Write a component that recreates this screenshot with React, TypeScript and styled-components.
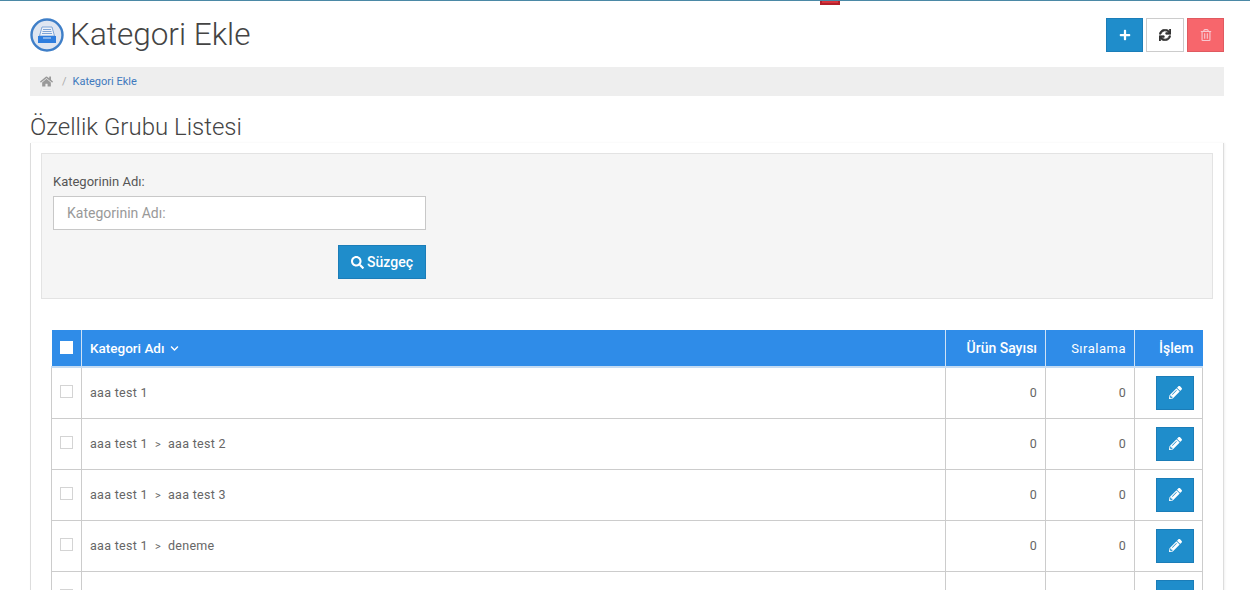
import { FunctionComponent, ReactNode } from "react";
import styled, { createGlobalStyle } from "styled-components";
import { FaHome, FaPlus, FaSync, FaRegTrashAlt, FaSearch, FaPencilAlt, FaChevronDown } from "react-icons/fa";

const GlobalStyle = createGlobalStyle`
    html, body {
        margin: 0;
        padding: 0;
        height: 590px;
        overflow: hidden;
        background: #fff;
        font-family: Roboto, "Liberation Sans", sans-serif;
        color: #555;
    }
`;

const Page = styled.div`
    position: relative;
    height: 590px;
    overflow: hidden;
    border-top: 1px solid #4b89a6;
    box-sizing: border-box;
    padding: 0 26px 0 30px;
`;

const RedTab = styled.div`
    position: absolute;
    top: -1px;
    left: 820px;
    width: 20px;
    height: 5px;
    box-sizing: border-box;
    background: #d8343d;
    border: 2px solid #b3202a;
    border-top: none;
`;

const Header = styled.div`
    display: flex;
    align-items: flex-start;
    justify-content: space-between;
    height: 66px;
`;

const TitleGroup = styled.div`
    display: flex;
    align-items: center;
    gap: 6px;
    padding-top: 15px;
`;

const Title = styled.h1`
    margin: 0;
    font-size: 31.5px;
    line-height: 38px;
    font-weight: 300;
    color: #444;
`;

const Actions = styled.div`
    display: flex;
    gap: 3px;
    padding-top: 17px;
`;

const ActionButton = styled.button<{ $tone: "blue" | "white" | "red" }>`
    width: ${(p) => (p.$tone === "white" ? "38px" : "37px")};
    height: 34px;
    padding: 0;
    display: flex;
    align-items: center;
    justify-content: center;
    font-size: 12px;
    border: 1px solid ${(p) => (p.$tone === "white" ? "#ccc" : p.$tone === "red" ? "#e05a60" : "#1b7db8")};
    background: ${(p) => (p.$tone === "white" ? "#fff" : p.$tone === "red" ? "#f7666c" : "#1f8dcb")};
    color: ${(p) => (p.$tone === "white" ? "#333" : p.$tone === "red" ? "#f8c8d0" : "#fff")};
`;

const RefreshIcon = styled(FaSync)`
    stroke: currentColor;
    stroke-width: 28px;
`;

const Breadcrumb = styled.div`
    height: 29px;
    display: flex;
    align-items: center;
    padding-left: 10px;
    background: #eee;
    font-size: 11px;
    color: #999;
`;

const Separator = styled.span`
    margin: 0 6px 0 9px;
    color: #aaa;
`;

const CrumbLink = styled.span`
    color: #3e79bd;
`;

const SectionTitle = styled.h2`
    margin: 16px 0 0;
    font-size: 24px;
    line-height: 30px;
    font-weight: 300;
    color: #444;
`;

const Portlet = styled.div`
    margin-top: 1px;
    padding: 10px 10px 0;
    height: 460px;
    border-left: 1px solid #ddd;
    border-right: 1px solid #ddd;
    box-shadow: 1px 0 2px rgba(0, 0, 0, 0.06);
`;

const FilterBox = styled.div`
    height: 146px;
    box-sizing: border-box;
    padding: 19px 11px 0;
    background: #f5f5f5;
    border: 1px solid #e3e3e3;
`;

const FilterForm = styled.div`
    width: 373px;
    display: flex;
    flex-direction: column;
`;

const FieldLabel = styled.label`
    font-size: 13px;
    line-height: 18px;
    color: #555;
    margin-bottom: 5px;
`;

const TextInput = styled.input`
    height: 34px;
    box-sizing: border-box;
    padding: 0 13px;
    border: 1px solid #c8c8c8;
    background: #fff;
    font-family: inherit;
    font-size: 14px;
    &::placeholder {
        color: #999;
        opacity: 1;
    }
`;

const FilterButton = styled.button`
    align-self: flex-end;
    margin-top: 15px;
    width: 88px;
    height: 34px;
    display: flex;
    align-items: center;
    justify-content: center;
    gap: 3px;
    padding: 0;
    background: #1f8dcb;
    border: 1px solid #1b7db8;
    color: #fff;
    font-family: inherit;
    font-size: 14px;
    font-weight: 500;
`;

const TableWrap = styled.div`
    margin: 31px 10px 0;
`;

const Table = styled.table`
    width: 1151px;
    table-layout: fixed;
    border-collapse: collapse;
`;

const HeadCell = styled.th<{ $right?: boolean; $plain?: boolean; $tight?: boolean }>`
    height: 37px;
    box-sizing: border-box;
    padding: ${(p) => (p.$tight ? "0 9px 0 0" : "0 8px")};
    background: #2f8ce8;
    border-left: 1px solid #cfe2f5;
    border-bottom: 2px solid #c5dcf3;
    color: #fff;
    font-size: ${(p) => (p.$plain ? "13px" : "14px")};
    font-weight: ${(p) => (p.$plain ? 400 : 500)};
    letter-spacing: ${(p) => (p.$plain ? "0.5px" : "0")};
    text-align: ${(p) => (p.$right ? "right" : "left")};
    &:first-child {
        border-left: none;
    }
`;

const NameHeading = styled.span`
    font-size: 13.5px;
`;

const Cell = styled.td<{ $right?: boolean }>`
    height: 51px;
    box-sizing: border-box;
    padding: 0 8px;
    border: 1px solid #ccc;
    border-top: none;
    font-size: 12.5px;
    letter-spacing: 0.3px;
    color: #666;
    text-align: ${(p) => (p.$right ? "right" : "left")};
`;

const ChevronIcon = styled(FaChevronDown)`
    font-size: 9px;
    margin-left: 5px;
`;

const CheckBox = styled.span<{ $head?: boolean }>`
    display: block;
    width: 13px;
    height: 13px;
    box-sizing: border-box;
    margin-bottom: 2px;
    background: #fff;
    border: 1px solid ${(p) => (p.$head ? "#fff" : "#d4d4d4")};
`;

const Arrow = styled.span`
    margin: 0 7px;
    font-size: 11px;
`;

const EditButton = styled.button`
    display: flex;
    align-items: center;
    justify-content: center;
    width: 38px;
    height: 34px;
    margin-left: 13px;
    padding: 0;
    background: #1f8dcb;
    border: 1px solid #1b7db8;
    color: #fff;
    font-size: 13px;
`;

const LogoIcon: FunctionComponent = () => (
    <svg width="34" height="34" viewBox="0 0 34 34">
        <circle cx="17" cy="17" r="15.5" fill="#dfe6f1" stroke="#3f7fc8" strokeWidth="2.4" />
        <path d="M12 9h10l2.5 9h-15z" fill="#eef2f8" stroke="#7fa6d8" strokeWidth="1" />
        <path d="M13 11.5h8M12.5 13.5h9M12 15.5h10" stroke="#6f9bd3" strokeWidth="0.9" />
        <path d="M8 18h18v7H8z" fill="#2f7ede" />
        <path d="M13 20h8" stroke="#bcd6f3" strokeWidth="1.2" />
    </svg>
);

const rows: ReactNode[] = [
    "aaa test 1",
    <>aaa test 1<Arrow>&gt;</Arrow>aaa test 2</>,
    <>aaa test 1<Arrow>&gt;</Arrow>aaa test 3</>,
    <>aaa test 1<Arrow>&gt;</Arrow>deneme</>,
    "",
];

export default function App() {
    return (
        <Page>
            <GlobalStyle />
            <RedTab />
            <Header>
                <TitleGroup>
                    <LogoIcon />
                    <Title>Kategori Ekle</Title>
                </TitleGroup>
                <Actions>
                    <ActionButton $tone="blue"><FaPlus /></ActionButton>
                    <ActionButton $tone="white"><RefreshIcon /></ActionButton>
                    <ActionButton $tone="red"><FaRegTrashAlt /></ActionButton>
                </Actions>
            </Header>
            <Breadcrumb>
                <FaHome size={13} />
                <Separator>/</Separator>
                <CrumbLink>Kategori Ekle</CrumbLink>
            </Breadcrumb>
            <SectionTitle>Özellik Grubu Listesi</SectionTitle>
            <Portlet>
                <FilterBox>
                    <FilterForm>
                        <FieldLabel>Kategorinin Adı:</FieldLabel>
                        <TextInput placeholder="Kategorinin Adı:" />
                        <FilterButton><FaSearch size={13} />Süzgeç</FilterButton>
                    </FilterForm>
                </FilterBox>
                <TableWrap>
                    <Table>
                        <colgroup>
                            <col width="30" />
                            <col width="864" />
                            <col width="100" />
                            <col width="89" />
                            <col width="68" />
                        </colgroup>
                        <thead>
                            <tr>
                                <HeadCell><CheckBox $head /></HeadCell>
                                <HeadCell><NameHeading>Kategori Adı</NameHeading><ChevronIcon /></HeadCell>
                                <HeadCell $right>Ürün Sayısı</HeadCell>
                                <HeadCell $right $plain>Sıralama</HeadCell>
                                <HeadCell $right $tight>İşlem</HeadCell>
                            </tr>
                        </thead>
                        <tbody>
                            {rows.map((name, i) => (
                                <tr key={i}>
                                    <Cell><CheckBox /></Cell>
                                    <Cell>{name}</Cell>
                                    <Cell $right>{i < 4 ? 0 : ""}</Cell>
                                    <Cell $right>{i < 4 ? 0 : ""}</Cell>
                                    <Cell><EditButton><FaPencilAlt /></EditButton></Cell>
                                </tr>
                            ))}
                        </tbody>
                    </Table>
                </TableWrap>
            </Portlet>
        </Page>
    );
}
